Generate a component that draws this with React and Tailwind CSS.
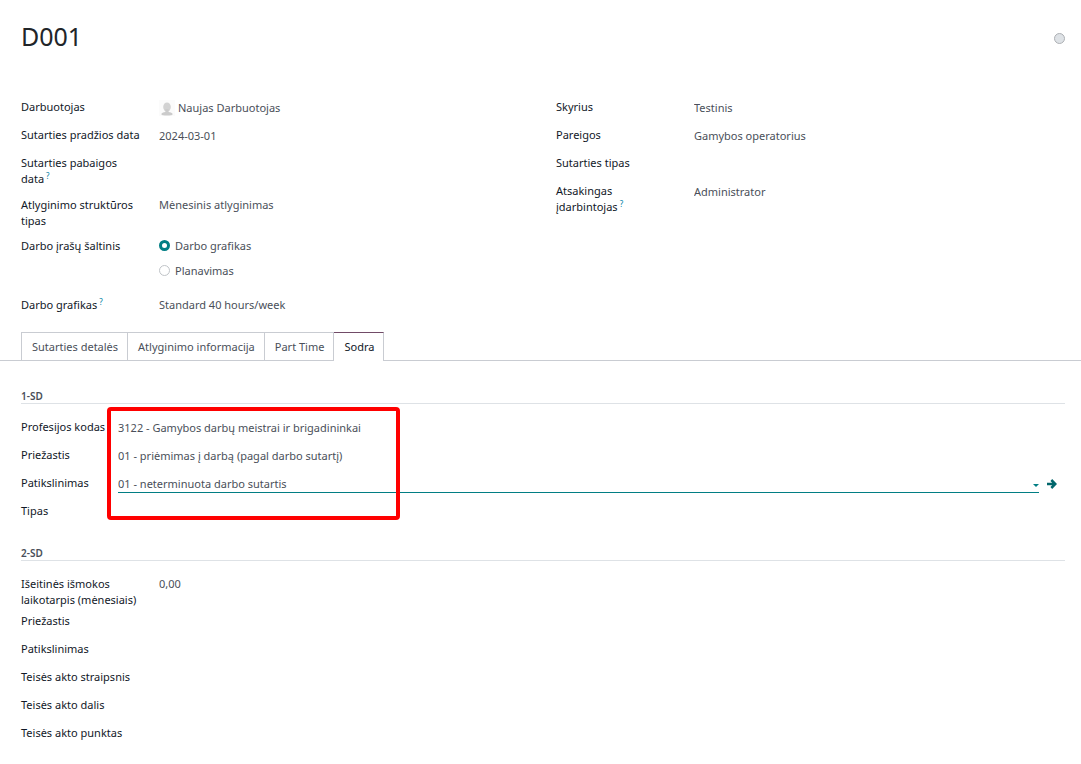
import React, { useState } from 'react';
import clsx from 'clsx';

const TABS = ['Sutarties detalės', 'Atlyginimo informacija', 'Part Time', 'Sodra'];

const SOURCES = [
  { id: 'calendar', label: 'Darbo grafikas' },
  { id: 'planning', label: 'Planavimas' },
];

const END_FIELDS = [
  { id: 'end_reason', label: 'Priežastis' },
  { id: 'end_detail', label: 'Patikslinimas' },
  { id: 'law_article', label: 'Teisės akto straipsnis' },
  { id: 'law_part', label: 'Teisės akto dalis' },
  { id: 'law_item', label: 'Teisės akto punktas' },
];

const Help = () => (
  <span className="ml-0.5 inline-block align-[4px] text-[8px] leading-none text-[#0180a5]">?</span>
);

const Avatar = () => (
  <svg viewBox="0 0 16 16" className="mr-[3px] h-4 w-4 shrink-0" aria-hidden="true">
    <rect width="16" height="16" fill="#fbfbfb" />
    <ellipse cx="8" cy="7" rx="3.8" ry="4.5" fill="#d2d2d2" />
    <path d="M6.4 9h3.2v3c1.900.2 4 .9 4 2.200 0 1-2.500 1.400-5.600 1.400s-5.600-.4-5.600-1.400C2.400 12.900 4.500 12.200 6.400 12z" fill="#cbcbcb" />
  </svg>
);

/**
 * One label + value row of the form
 * @param {boolean} narrow - Short label column, used by the 1-SD group
 * @param {boolean} flush - Value sits on the same line as the label text
 * @param {string} gap - Margin class below the row
 */
const Field = ({ id, label, help, value = '', narrow, flush, gap = 'mb-1.5', children }) => (
  <div className={clsx('flex min-h-[22px]', gap)}>
    <label
      htmlFor={id}
      className={clsx('shrink-0 pb-1 text-[#111827]', narrow ? 'w-[97px]' : 'w-[138px] pr-[18px]')}
    >
      {label}
      {help && <Help />}
    </label>
    {children || (
      <input
        id={id}
        type="text"
        defaultValue={value}
        className={clsx('min-w-0 flex-1 text-[#4a4f59] outline-none', flush ? 'h-4' : 'h-[17px]')}
      />
    )}
  </div>
);

const SectionTitle = ({ children }) => (
  <h2 className="mb-[15px] border-b border-[#dee2e6] text-[10px] leading-[13px] font-semibold text-[#4a4f59]">
    {children}
  </h2>
);

const WorkEntrySource = () => {
  const [source, setSource] = useState('calendar');

  return (
    <div role="radiogroup" aria-label="Darbo įrašų šaltinis" className="pb-[3px]">
      {SOURCES.map((item) => (
        <div key={item.id} className="flex h-[25px] items-start">
          <input
            id={item.id}
            type="radio"
            name="source"
            checked={source === item.id}
            onChange={() => setSource(item.id)}
            className="mt-0.5 mr-[5px] h-[11px] w-[11px] appearance-none rounded-full border border-[#c0c4c8] bg-white checked:border-[3px] checked:border-[#017e84]"
          />
          <label htmlFor={item.id} className="text-[#4a4f59]">{item.label}</label>
        </div>
      ))}
    </div>
  );
};

const App = () => {
  const [tab, setTab] = useState('Sodra');

  return (
    <main className="min-h-screen bg-white pb-4 font-['Noto_Sans',sans-serif] text-[11px] leading-4">
      <header className="flex items-start justify-between pt-5 pr-4 pl-[21px]">
        <h1 className="text-[25px] leading-8 text-[#212529]">D001</h1>
        <button
          type="button"
          aria-label="Būsena"
          className="mt-[13px] h-[11px] w-[11px] rounded-full border border-[#adb0b4] bg-[#dee2e6]"
        />
      </header>

      <div className="mt-[47px] grid grid-cols-2 gap-[26px] pr-4 pl-[21px]">
        <div>
          <Field id="employee" label="Darbuotojas">
            <div className="flex h-[17px] min-w-0 flex-1 items-end">
              <Avatar />
              <input
                id="employee"
                type="text"
                defaultValue="Naujas Darbuotojas"
                className="h-[17px] min-w-0 flex-1 text-[#4a4f59] outline-none"
              />
            </div>
          </Field>
          <Field id="date_start" label="Sutarties pradžios data" value="2024-03-01" />
          <Field id="date_end" label="Sutarties pabaigos data" help />
          <Field
            id="structure"
            label="Atlyginimo struktūros tipas"
            flush
            gap="mb-[5px]"
            value="Mėnesinis atlyginimas"
          />
          <Field id="calendar" label="Darbo įrašų šaltinis">
            <WorkEntrySource />
          </Field>
          <Field id="schedule" label="Darbo grafikas" help flush value="Standard 40 hours/week" />
        </div>
        <div>
          <Field id="department" label="Skyrius" value="Testinis" />
          <Field id="job" label="Pareigos" value="Gamybos operatorius" />
          <Field id="contract_type" label="Sutarties tipas" />
          <Field id="responsible" label="Atsakingas įdarbintojas" help value="Administrator" />
        </div>
      </div>

      <div role="tablist" className="mt-[7px] flex border-b border-[#c9ccd2] pl-[21px]">
        {TABS.map((name, i) => (
          <button
            key={name}
            type="button"
            role="tab"
            aria-selected={tab === name}
            onClick={() => setTab(name)}
            className={clsx(
              '-mb-px h-[29px] border-t border-r pr-[9px] pl-2.5',
              i === 0 && 'border-l',
              tab === name
                ? 'border-[#c9ccd2] border-t-[#714b67] bg-white text-[#111827]'
                : 'border-b border-[#c9ccd2] text-[#4a4f59]'
            )}
          >
            {name}
          </button>
        ))}
      </div>

      <section className="relative mt-[29px] pr-4 pl-[21px]">
        <SectionTitle>1-SD</SectionTitle>
        <Field id="occupation" label="Profesijos kodas" narrow value="3122 - Gamybos darbų meistrai ir brigadininkai" />
        <Field id="reason" label="Priežastis" narrow value="01 - priėmimas į darbą (pagal darbo sutartį)" />
        <Field id="detail" label="Patikslinimas" narrow>
          <div className="flex h-[18px] min-w-0 flex-1 items-center border-b border-[#017e84]">
            <input
              id="detail"
              type="text"
              defaultValue="01 - neterminuota darbo sutartis"
              className="min-w-0 flex-1 text-[#4a4f59] outline-none"
            />
            <svg viewBox="0 0 6 3" className="mt-1 h-[3px] w-1.5" aria-hidden="true">
              <path d="M0 0h6L3 3z" fill="#017e84" />
            </svg>
          </div>
          <button type="button" aria-label="Atidaryti" className="flex h-[18px] w-[26px] items-center justify-center">
            <svg viewBox="0 0 10 10" className="h-2.5 w-2.5" fill="none" stroke="#01666b" strokeWidth="2.5">
              <path d="M0 5h8M4.300 1L8.300 5 4.300 9" />
            </svg>
          </button>
        </Field>
        <Field id="type" label="Tipas" narrow />
        <div className="pointer-events-none absolute top-[17px] left-[107px] h-[113px] w-[293px] rounded-sm border-4 border-[#ff0000]" />
      </section>

      <section className="mt-[22px] pr-4 pl-[21px]">
        <SectionTitle>2-SD</SectionTitle>
        <Field
          id="severance"
          label="Išeitinės išmokos laikotarpis (mėnesiais)"
          flush
          gap="mb-px"
          value="0,00"
        />
        {END_FIELDS.map((field) => (
          <Field key={field.id} id={field.id} label={field.label} />
        ))}
      </section>
    </main>
  );
};

export default App;
